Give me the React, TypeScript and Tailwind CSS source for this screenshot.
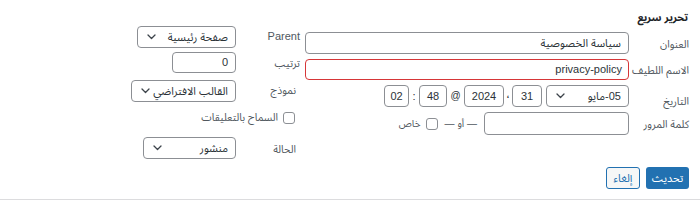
import React from "react";

const Chevron = () => (
  <svg width="9" height="6" viewBox="0 0 9 6" className="shrink-0">
    <polyline points="1,1 4.5,4.5 8,1" fill="none" stroke="#3c434a" strokeWidth="1.3" strokeLinecap="round" strokeLinejoin="round" />
  </svg>
);

const Select = ({ text, w }: { text: string; w: string }) => (
  <div className={`${w} h-[22px] flex items-center justify-between border border-[#8c8f94] rounded-[4px] pr-[7px] pl-[9px] text-[#2c3338] bg-white`}>
    <span className="whitespace-nowrap leading-none">{text}</span>
    <Chevron />
  </div>
);

const Box = ({ text, w }: { text: string; w: string }) => (
  <div className={`${w} h-[22px] flex items-center justify-center border border-[#8c8f94] rounded-[4px] text-[#2c3338] bg-white leading-none`}>
    {text}
  </div>
);

const Check = () => <div className="w-[12px] h-[12px] border border-[#8c8f94] rounded-[3px] bg-white shrink-0" />;

export default function App() {
  return (
    <div dir="rtl" className="w-[700px] h-[201px] bg-white font-['Liberation_Sans','Noto_Sans_Arabic','Noto_Naskh_Arabic','DejaVu_Sans',sans-serif] text-[11px] text-[#2c3338]">
      <div className="h-[200px] border-b border-[#dcdcde]">
        <div className="flex items-start gap-[5px] pr-[11px]">
          {/* Right column */}
          <div className="w-[384px] flex flex-col">
            <div className="h-[32px] pt-[10px] pr-[1px] font-bold text-[10.5px] text-[#1d2327] leading-[14px]">تحرير سريع</div>
            <div className="flex items-center gap-[4px] h-[22px]">
              <span className="w-[56px] text-[10.5px] text-[#50575e] pt-[3px] whitespace-nowrap">العنوان</span>
              <div className="flex-1 h-[22px] flex items-center border border-[#8c8f94] rounded-[4px] px-[7px]">سياسة الخصوصية</div>
            </div>
            <div className="flex items-center gap-[4px] h-[21px] mt-[5px]">
              <span className="w-[56px] text-[10.5px] text-[#50575e] pt-[3px] whitespace-nowrap">الاسم اللطيف</span>
              <div className="flex-1 h-[21px] flex items-center border border-[#d63638] rounded-[4px] px-[6px]">privacy-policy</div>
            </div>
            <div className="flex items-start gap-[4px] h-[22px] mt-[5px]">
              <span className="w-[56px] text-[10.5px] text-[#50575e] pt-[9px] whitespace-nowrap">التاريخ</span>
              <div className="flex items-center h-[22px]">
                <Select text="05-مايو" w="w-[83px]" />
                <div className="w-[4px]" />
                <Box text="31" w="w-[30px]" />
                <span className="w-[8px] text-center self-start pt-[1px]">،</span>
                <Box text="2024" w="w-[40px]" />
                <span className="w-[17px] text-center self-start pt-[3px] text-[10px]">@</span>
                <Box text="48" w="w-[28px]" />
                <span className="w-[10px] text-center self-start pt-[3px]">:</span>
                <Box text="02" w="w-[25px]" />
              </div>
            </div>
            <div className="flex items-center gap-[6px] h-[23px] mt-[5px]">
              <span className="w-[54px] text-[10.5px] text-[#50575e] pt-[3px] whitespace-nowrap">كلمة المرور</span>
              <div className="w-[145px] h-[23px] border border-[#8c8f94] rounded-[4px]" />
              <span className="mr-[1px] text-[10px] text-[#50575e] whitespace-nowrap">— أو —</span>
              <div className="mr-[1px]"><Check /></div>
              <span className="mr-[-1px] text-[10px] text-[#50575e]">خاص</span>
            </div>
          </div>
          {/* Left column */}
          <div className="w-[170px] pt-[26px] flex flex-col">
            <div className="flex items-start gap-[6px]">
              <span className="w-[58px] text-[#50575e] pt-[3px] leading-[14px]">Parent</span>
              <Select text="صفحة رئيسية" w="w-[99px]" />
            </div>
            <div className="flex items-start gap-[6px] mt-[4px]">
              <span className="w-[58px] text-[10.5px] text-[#50575e] pt-[4px] leading-[14px]">ترتيب</span>
              <div className="w-[64px] h-[21px] flex items-center border border-[#8c8f94] rounded-[4px] px-[7px] leading-none">0</div>
            </div>
            <div className="flex items-start gap-[6px] mt-[7px]">
              <span className="w-[58px] text-[10.5px] text-[#50575e] pt-[3px] leading-[14px] pr-[4px]">نموذج</span>
              <Select text="القالب الافتراضي" w="w-[105px]" />
            </div>
            <div className="flex items-center gap-[5px] mt-[10px] pr-[5px] h-[12px]">
              <Check />
              <span className="text-[10.5px] text-[#50575e] whitespace-nowrap">السماح بالتعليقات</span>
            </div>
            <div className="flex items-start gap-[6px] mt-[13px]">
              <span className="w-[58px] text-[10.5px] text-[#50575e] pt-[5px] leading-[14px] pr-[4px]">الحالة</span>
              <Select text="منشور" w="w-[93px]" />
            </div>
          </div>
        </div>
        <div className="flex items-center gap-[6px] pr-[11px] mt-[8px]">
          <div className="w-[43px] h-[22px] flex items-center justify-center rounded-[3px] bg-[#2271b1] text-white leading-none">تحديث</div>
          <div className="w-[34px] h-[22px] flex items-center justify-center rounded-[3px] border border-[#2271b1] bg-[#f6f7f7] text-[#2271b1] leading-none">إلغاء</div>
        </div>
      </div>
    </div>
  );
}
